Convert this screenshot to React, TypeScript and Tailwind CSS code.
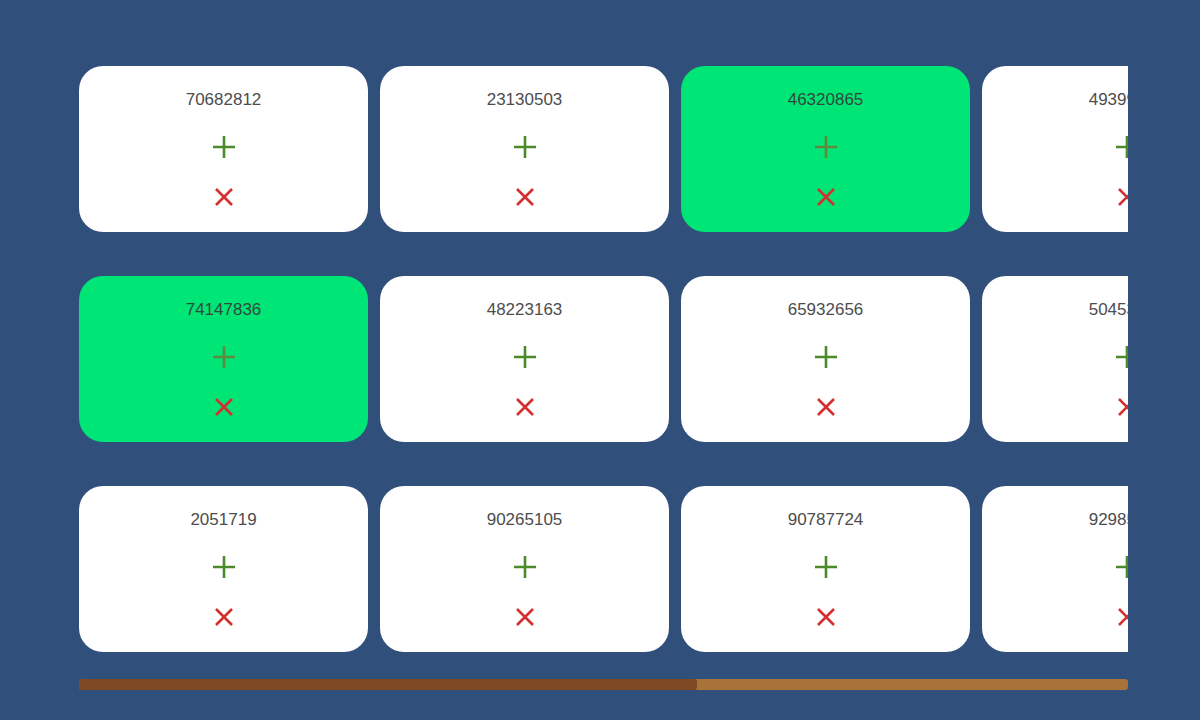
import React from "react";

const rows = [
  [
    { n: "70682812", sel: false },
    { n: "23130503", sel: false },
    { n: "46320865", sel: true },
    { n: "49399127", sel: false },
  ],
  [
    { n: "74147836", sel: true },
    { n: "48223163", sel: false },
    { n: "65932656", sel: false },
    { n: "50453318", sel: false },
  ],
  [
    { n: "2051719", sel: false },
    { n: "90265105", sel: false },
    { n: "90787724", sel: false },
    { n: "92985460", sel: false },
  ],
];

function Plus({ color }: { color: string }) {
  return (
    <svg width="24" height="24" viewBox="0 0 24 24">
      <path d="M12 1V23M1 12H23" stroke={color} strokeWidth="2.6" fill="none" />
    </svg>
  );
}

function Cross() {
  return (
    <svg width="20" height="20" viewBox="0 0 20 20">
      <path d="M2 2L18 18M18 2L2 18" stroke="#d32f2f" strokeWidth="2.6" fill="none" />
    </svg>
  );
}

function Card({ n, sel }: { n: string; sel: boolean }) {
  return (
    <div
      className={`w-[289px] h-[166px] shrink-0 rounded-[24px] flex flex-col items-center pt-[24px] ${
        sel ? "bg-[#00e676]" : "bg-white"
      }`}
    >
      <div
        className={`text-[17px] leading-[20px] whitespace-nowrap ${sel ? "text-[#2e4a3c]" : "text-[#4d4d4d]"}`}
        style={{ fontFamily: '"Liberation Sans", Arial, sans-serif' }}
      >
        {n}
      </div>
      <div className="mt-[25px]">
        <Plus color={sel ? "#5e8a3e" : "#4b8a2b"} />
      </div>
      <div className="mt-[28px]">
        <Cross />
      </div>
    </div>
  );
}

export default function App() {
  return (
    <div className="w-[1200px] h-[720px] bg-[#304f7b] pt-[66px] pl-[79px]">
      <div className="w-[1049px] overflow-hidden flex flex-col gap-[44px]">
        {rows.map((r, i) => (
          <div key={i} className="flex gap-[12px]">
            {r.map((c, j) => (
              <Card key={j} n={c.n} sel={c.sel} />
            ))}
          </div>
        ))}
      </div>
      <div className="w-[1049px] h-[11px] mt-[27px] rounded-[3px] bg-[#a87339] flex">
        <div className="w-[618px] h-full rounded-[3px] bg-[#7f4825]" />
      </div>
    </div>
  );
}
